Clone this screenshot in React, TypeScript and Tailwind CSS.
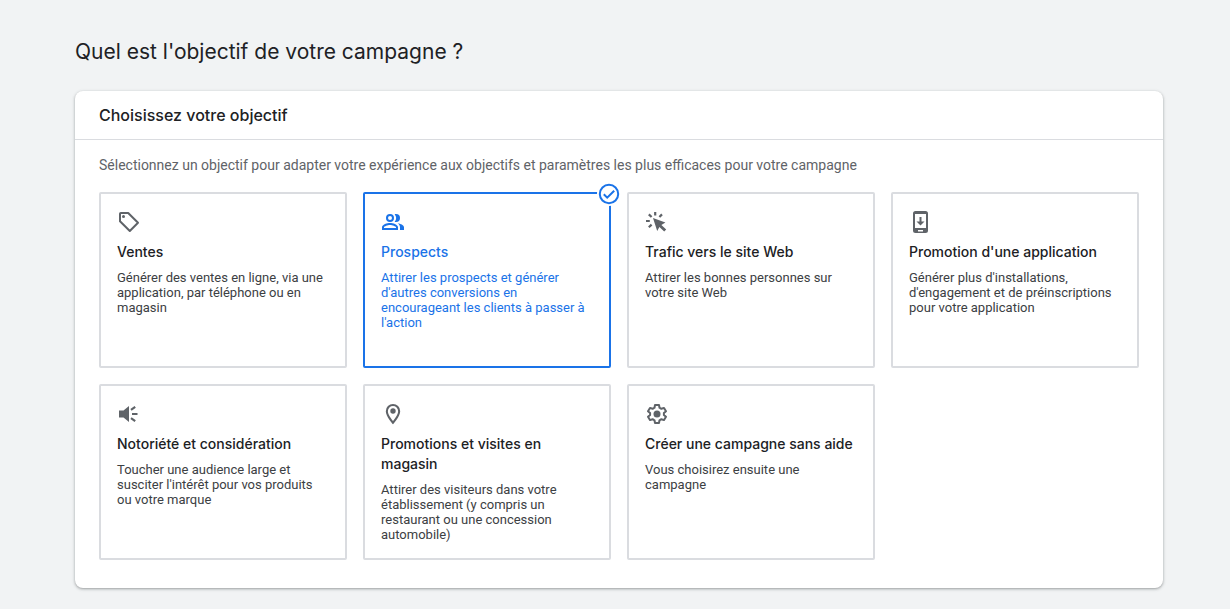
import { useState } from "react";
import type { ReactNode } from "react";
import clsx from "clsx";

interface Objective {
  id: string;
  title: string;
  description: string;
  icon: ReactNode;
}

const TagIcon = () => (
  <svg viewBox="0 0 24 24" className="size-6" fill="none" aria-hidden="true">
    <path
      d="M3.8 3h7.4L21 12.8 12.8 21 3 11.2V3.8Q3 3 3.8 3z"
      stroke="currentColor"
      strokeWidth="2"
      strokeLinejoin="round"
    />
    <circle cx="6.5" cy="6.5" r="1.5" fill="currentColor" />
  </svg>
);

const PeopleIcon = () => (
  <svg viewBox="0 0 24 24" className="size-6" fill="currentColor" aria-hidden="true">
    <path
      fillRule="evenodd"
      d="M9 12a4 4 0 1 0 0-8 4 4 0 0 0 0 8zm0-6a2 2 0 1 1 0 4 2 2 0 0 1 0-4zM1 17.2C1 14.5 6.3 13 9 13s8 1.5 8 4.2V20H1v-2.8zM3 18h12v-.8c-.4-.8-3.5-2.2-6-2.2s-5.6 1.4-6 2.2V18z"
    />
    <path d="M15 12a4 4 0 0 0 0-8c-.5 0-.9.1-1.35.23a6 6 0 0 1 0 7.54c.45.15.87.23 1.35.23zM16.7 13.15C18.1 14.1 19 15.4 19 17.2V20h4v-2.8c0-2.3-3.5-3.55-6.3-4.05z" />
  </svg>
);

const ClickIcon = () => (
  <svg viewBox="0 0 24 24" className="size-6" fill="none" aria-hidden="true">
    <path
      d="M1 11h3.8M3.8 4.4l2.8 2.6M10.2 2v3.6M17 4.4l-2.6 2.6M3.8 17.2l2.8-2.6"
      stroke="currentColor"
      strokeWidth="2.2"
    />
    <path
      d="M8 8l12.4 4.6-4 2.4 4.8 4.6-2 2-4.8-4.7-2.2 4.1z"
      fill="currentColor"
    />
  </svg>
);

const PhoneIcon = () => (
  <svg viewBox="0 0 24 24" className="size-6" fill="currentColor" aria-hidden="true">
    <path
      fillRule="evenodd"
      d="M6.5 1h10a2.5 2.5 0 0 1 2.5 2.5v17a2.500 2.500 0 0 1-2.500 2.500h-10A2.500 2.500 0 0 1 4 20.500v-17A2.500 2.500 0 0 1 6.500 1zM6 4v14h11V4H6zM9 20v1.400h5V20H9z"
    />
    <path d="M10.500 7h2v4.500h3l-4 4-4-4h3z" />
  </svg>
);

const SpeakerIcon = () => (
  <svg viewBox="0 0 24 24" className="size-6" fill="currentColor" aria-hidden="true">
    <path d="M2 8.500h4.500L12 4v16l-5.500-4.500H2z" />
    <path
      d="M15 12h5.500M14 7.800l4.200-3M14 16.200l4.200 3"
      fill="none"
      stroke="currentColor"
      strokeWidth="2.200"
    />
  </svg>
);

const PinIcon = () => (
  <svg viewBox="0 0 24 24" className="size-6" fill="currentColor" aria-hidden="true">
    <path
      fillRule="evenodd"
      d="M12 2a7.200 7.200 0 0 0-7.200 7.200C4.800 14.500 12 22.300 12 22.300s7.200-7.800 7.200-13.100A7.200 7.200 0 0 0 12 2zM6.900 9.200a5.100 5.100 0 0 1 10.200 0c0 2.900-2.900 7.200-5.100 9.900-2.100-2.700-5.100-7-5.100-9.900z"
    />
    <circle cx="12" cy="9" r="2.700" />
  </svg>
);

const GearIcon = () => (
  <svg viewBox="0 0 24 24" className="size-6" fill="none" aria-hidden="true">
    <path
      d="M10 3h4l.5 2.700 1.900 1.100 2.600-.9 2 3.400-2.100 1.800v1.800l2.100 1.800-2 3.400-2.600-.9-1.900 1.100L14 21h-4l-.5-2.700-1.900-1.100-2.600.9-2-3.400 2.100-1.800v-1.800L3 9.300l2-3.400 2.600.9 1.900-1.100z"
      stroke="currentColor"
      strokeWidth="2"
      strokeLinejoin="round"
    />
    <circle cx="12" cy="12" r="3.500" fill="currentColor" />
  </svg>
);

const CheckBadge = () => (
  <span className="absolute -top-3 -right-3 rounded-full bg-white">
    <svg viewBox="0 0 24 24" className="size-6" fill="none" aria-hidden="true">
      <circle cx="12" cy="12" r="9.200" stroke="currentColor" strokeWidth="2" />
      <path d="M6.800 12.300l3.400 3.400 7-7" stroke="currentColor" strokeWidth="2" />
    </svg>
  </span>
);

const OBJECTIVES: Objective[] = [
  {
    id: "sales",
    title: "Ventes",
    description:
      "Générer des ventes en ligne, via une application, par téléphone ou en magasin",
    icon: <TagIcon />,
  },
  {
    id: "leads",
    title: "Prospects",
    description:
      "Attirer les prospects et générer d'autres conversions en encourageant les clients à passer à l'action",
    icon: <PeopleIcon />,
  },
  {
    id: "traffic",
    title: "Trafic vers le site Web",
    description: "Attirer les bonnes personnes sur votre site Web",
    icon: <ClickIcon />,
  },
  {
    id: "app",
    title: "Promotion d'une application",
    description:
      "Générer plus d'installations, d'engagement et de préinscriptions pour votre application",
    icon: <PhoneIcon />,
  },
  {
    id: "awareness",
    title: "Notoriété et considération",
    description:
      "Toucher une audience large et susciter l'intérêt pour vos produits ou votre marque",
    icon: <SpeakerIcon />,
  },
  {
    id: "local",
    title: "Promotions et visites en magasin",
    description:
      "Attirer des visiteurs dans votre établissement (y compris un restaurant ou une concession automobile)",
    icon: <PinIcon />,
  },
  {
    id: "none",
    title: "Créer une campagne sans aide",
    description: "Vous choisirez ensuite une campagne",
    icon: <GearIcon />,
  },
];

interface ObjectiveCardProps {
  objective: Objective;
  selected: boolean;
  onSelect: (id: string) => void;
}

const ObjectiveCard = ({ objective, selected, onSelect }: ObjectiveCardProps) => (
  <label
    className={clsx(
      "relative flex min-h-44 cursor-pointer flex-col rounded-xs border-2 p-4",
      selected ? "border-[#1a73e8] text-[#1a73e8]" : "border-[#dadce0] text-[#3c4043]"
    )}
  >
    <input
      type="radio"
      name="objective"
      value={objective.id}
      checked={selected}
      onChange={() => onSelect(objective.id)}
      className="sr-only"
    />
    <span className={selected ? "text-[#1a73e8]" : "text-[#5f6368]"}>
      {objective.icon}
    </span>
    <span
      className={clsx(
        "mt-2 font-['Inter',sans-serif] text-sm leading-5 font-medium",
        selected ? "text-[#1a73e8]" : "text-[#202124]"
      )}
    >
      {objective.title}
    </span>
    <span className="mt-2 pr-1 text-[13px] leading-[15px]">
      {objective.description}
    </span>
    {selected && <CheckBadge />}
  </label>
);

export default function App() {
  const [selectedId, setSelectedId] = useState("leads");

  return (
    <main className="min-h-screen bg-[#f1f3f4] pt-9 pr-[67px] pb-5 pl-[75px] font-['Roboto',sans-serif]">
      <h1 className="font-['Inter',sans-serif] text-[21px] leading-8 text-[#202124]">
        Quel est l'objectif de votre campagne ?
      </h1>

      <section className="mt-[23px] rounded-lg bg-white shadow-[0_1px_2px_rgba(60,64,67,0.3),0_1px_3px_1px_rgba(60,64,67,0.15)]">
        <h2 className="border-b border-[#dadce0] px-6 py-3 font-['Inter',sans-serif] text-base leading-6 font-medium text-[#202124]">
          Choisissez votre objectif
        </h2>
        <div className="px-6 pt-[15px] pb-7">
          <p id="objective-hint" className="text-sm leading-5 text-[#5f6368]">
            Sélectionnez un objectif pour adapter votre expérience aux objectifs
            et paramètres les plus efficaces pour votre campagne
          </p>
          <div
            role="radiogroup"
            aria-labelledby="objective-hint"
            className="mt-[17px] grid grid-cols-4 gap-4"
          >
            {OBJECTIVES.map((objective) => (
              <ObjectiveCard
                key={objective.id}
                objective={objective}
                selected={objective.id === selectedId}
                onSelect={setSelectedId}
              />
            ))}
          </div>
        </div>
      </section>
    </main>
  );
}
